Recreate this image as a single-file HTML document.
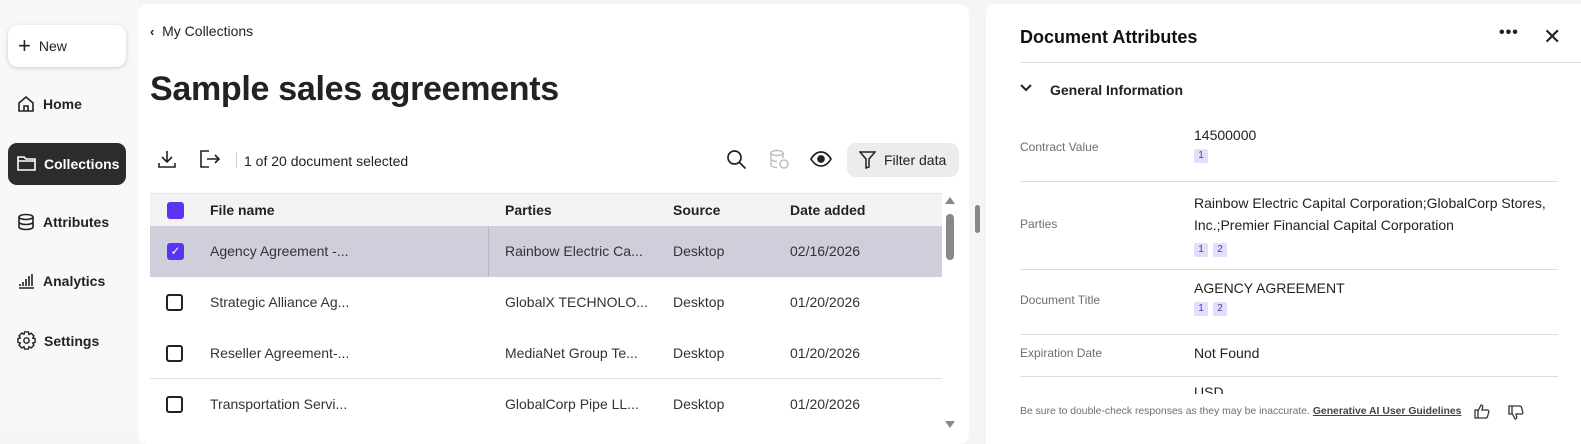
<!DOCTYPE html>
<html><head><meta charset="utf-8"><style>
*{box-sizing:border-box;margin:0;padding:0}
body{width:1581px;height:433px;overflow:hidden;background:#f5f5f5;font-family:"Liberation Sans",sans-serif;color:#222;position:relative}
.a{position:absolute}
.nav{left:17px;font-size:14px;font-weight:bold;color:#222;display:flex;align-items:center;gap:8px}
.cb{position:absolute;left:166px;width:17px;height:17px;border:2px solid #222;border-radius:3px}
.row{position:absolute;left:150px;width:792px;height:51px;font-size:14px;color:#333}
.row span{position:absolute;top:17px}
.lbl{position:absolute;left:1020px;font-size:12px;color:#6e6e6e}
.val{position:absolute;left:1194px;font-size:14px;color:#222}
.tag{display:inline-block;width:14px;height:14px;background:#e3defc;color:#4b3ab0;font-size:10px;text-align:center;line-height:14px;border-radius:2px;margin-right:5px}
.hr{position:absolute;left:1020px;width:538px;height:1px;background:#ddd}
</style></head><body>
<div class="a" style="left:0;top:0;width:138px;height:433px;background:#f8f8f8"></div>
<div class="a" style="left:8px;top:25px;width:118px;height:42px;background:#fff;border-radius:10px;box-shadow:0 1px 4px rgba(0,0,0,.18);font-size:14px;display:flex;align-items:center;padding-left:10px;gap:8px"><span style="font-size:22px;font-weight:300">+</span>New</div>
<div class="a nav" style="top:95px"><svg width="18" height="18" viewBox="0 0 18 18" fill="none" stroke="#222" stroke-width="1.6"><path d="M2 8L9 2l7 6v8H2z M7 16v-5h4v5"/></svg>Home</div>
<div class="a" style="left:8px;top:143px;width:118px;height:42px;background:#2c2c2c;border-radius:9px"></div>
<div class="a nav" style="top:155px;color:#fff"><svg width="19" height="17" viewBox="0 0 19 17" fill="none" stroke="#fff" stroke-width="1.6"><path d="M1 2h6l2 2h9v11H1z M1 6h17"/></svg>Collections</div>
<div class="a nav" style="top:213px"><svg width="18" height="18" viewBox="0 0 18 18" fill="none" stroke="#222" stroke-width="1.6"><ellipse cx="9" cy="4" rx="7" ry="2.5"/><path d="M2 4v10c0 1.4 3 2.5 7 2.5s7-1.1 7-2.5V4M2 9c0 1.4 3 2.5 7 2.5s7-1.1 7-2.5"/></svg>Attributes</div>
<div class="a nav" style="top:272px"><svg width="18" height="18" viewBox="0 0 18 18" stroke="#222" stroke-width="1.6"><path d="M2 16h15M3 14v-2M6 14v-4M9 14V7M12 14V4M15 14V2"/></svg>Analytics</div>
<div class="a nav" style="top:331px"><svg width="19" height="19" viewBox="0 0 20 20" fill="none" stroke="#222" stroke-width="1.5"><path d="M8 1h4l.6 2.6 2.4-1.2 2.8 2.8-1.2 2.4L19 8v4l-2.4.6 1.2 2.4-2.8 2.8-2.4-1.2L12 19H8l-.6-2.4-2.4 1.2-2.8-2.8 1.2-2.4L1 12V8l2.4-.6-1.2-2.4 2.8-2.8 2.4 1.2z"/><circle cx="10" cy="10" r="2.8"/></svg>Settings</div>

<div class="a" style="left:138px;top:4px;width:831px;height:440px;background:#fff;border-radius:10px"></div>
<div class="a" style="left:150px;top:23px;font-size:14px;color:#222"><b style="font-size:13px">‹</b>&nbsp; My Collections</div>
<div class="a" style="left:150px;top:70px;font-size:34px;font-weight:bold;color:#222;letter-spacing:-.3px">Sample sales agreements</div>
<svg class="a" style="left:157px;top:149px" width="20" height="20" viewBox="0 0 20 20" fill="none" stroke="#222" stroke-width="1.6"><path d="M10 2v11M5 8l5 5 5-5M2 14v4h16v-4"/></svg>
<svg class="a" style="left:199px;top:149px" width="22" height="20" viewBox="0 0 22 20" fill="none" stroke="#222" stroke-width="1.6"><path d="M10 2H2v16h8M8 10h12M16 6l4 4-4 4"/></svg>
<div class="a" style="left:236px;top:152px;width:1px;height:16px;background:#ccc"></div>
<div class="a" style="left:244px;top:153px;font-size:14px">1 of 20 document selected</div>
<svg class="a" style="left:726px;top:149px" width="21" height="21" viewBox="0 0 21 21" fill="none" stroke="#222" stroke-width="1.7"><circle cx="8.5" cy="8.5" r="6.5"/><path d="M13.5 13.5l6 6"/></svg>
<svg class="a" style="left:769px;top:149px" width="21" height="21" viewBox="0 0 21 21" fill="none" stroke="#bbb" stroke-width="1.4"><ellipse cx="8" cy="4" rx="6" ry="2.5"/><path d="M2 4v12c0 1.4 3 2.5 6 2.5M14 4v5M2 10c0 1.4 3 2.5 6 2.5"/><circle cx="15" cy="15" r="4"/></svg>
<svg class="a" style="left:810px;top:150px" width="22" height="18" viewBox="0 0 22 18" fill="none" stroke="#222" stroke-width="1.7"><path d="M1 9c3-5 6-7 10-7s7 2 10 7c-3 5-6 7-10 7S4 14 1 9z"/><circle cx="11" cy="9" r="3" fill="#222"/></svg>
<div class="a" style="left:847px;top:143px;width:112px;height:34px;background:#ececec;border-radius:9px;font-size:14px;display:flex;align-items:center;padding-left:12px;gap:8px"><svg width="17" height="18" viewBox="0 0 17 18" fill="none" stroke="#222" stroke-width="1.5"><path d="M1 1h15l-6 7v8l-3 1V8z"/></svg>Filter data</div>

<div class="a" style="left:150px;top:193px;width:792px;height:33px;background:#f3f3f3;border-top:1px solid #e4e4e4"></div>
<div class="a" style="left:167px;top:202px;width:17px;height:17px;background:#5a34f0;border-radius:3px"></div>
<div class="a" style="top:202px;left:210px;font-size:14px;font-weight:bold">File name</div>
<div class="a" style="top:202px;left:505px;font-size:14px;font-weight:bold">Parties</div>
<div class="a" style="top:202px;left:673px;font-size:14px;font-weight:bold">Source</div>
<div class="a" style="top:202px;left:790px;font-size:14px;font-weight:bold">Date added</div>

<div class="row" style="top:226px;background:#cfcfdc"><span style="left:60px">Agency Agreement -...</span><span style="left:355px">Rainbow Electric Ca...</span><span style="left:523px">Desktop</span><span style="left:640px">02/16/2026</span><div class="a" style="left:338px;top:0;width:1px;height:51px;background:#b8b8c8"></div></div>
<div class="a" style="left:167px;top:243px;width:17px;height:17px;background:#5a34f0;border-radius:3px;color:#fff;font-size:12px;text-align:center;line-height:17px">✓</div>
<div class="row" style="top:277px"><span style="left:60px">Strategic Alliance Ag...</span><span style="left:355px">GlobalX TECHNOLO...</span><span style="left:523px">Desktop</span><span style="left:640px">01/20/2026</span></div>
<div class="cb" style="top:294px"></div>
<div class="row" style="top:328px"><span style="left:60px">Reseller Agreement-...</span><span style="left:355px">MediaNet Group Te...</span><span style="left:523px">Desktop</span><span style="left:640px">01/20/2026</span></div>
<div class="cb" style="top:345px"></div>
<div class="a" style="left:150px;top:378px;width:792px;height:1px;background:#e2e2e2"></div>
<div class="row" style="top:379px"><span style="left:60px">Transportation Servi...</span><span style="left:355px">GlobalCorp Pipe LL...</span><span style="left:523px">Desktop</span><span style="left:640px">01/20/2026</span></div>
<div class="cb" style="top:396px"></div>
<div class="a" style="left:945px;top:197px;width:0;height:0;border-left:5px solid transparent;border-right:5px solid transparent;border-bottom:7px solid #888"></div>
<div class="a" style="left:946px;top:214px;width:8px;height:46px;background:#888;border-radius:4px"></div>
<div class="a" style="left:945px;top:421px;width:0;height:0;border-left:5px solid transparent;border-right:5px solid transparent;border-top:7px solid #888"></div>
<div class="a" style="left:975px;top:205px;width:5px;height:28px;background:#888;border-radius:3px"></div>

<div class="a" style="left:986px;top:4px;width:595px;height:440px;background:#fff;border-radius:10px 0 0 0"></div>
<div class="a" style="left:1020px;top:27px;font-size:18px;font-weight:bold;color:#111">Document Attributes</div>
<div class="a" style="left:1499px;top:24px;font-size:16px;font-weight:bold;letter-spacing:1px">•••</div>
<div class="a" style="left:1543px;top:24px;font-size:22px;color:#222">✕</div>
<div class="a" style="left:1020px;top:62px;width:561px;height:1px;background:#ddd"></div>
<svg class="a" style="left:1020px;top:84px" width="12" height="9" viewBox="0 0 12 9" fill="none" stroke="#222" stroke-width="2"><path d="M1 1l5 5 5-5"/></svg>
<div class="a" style="left:1050px;top:82px;font-size:14px;font-weight:bold;color:#222">General Information</div>
<div class="lbl" style="top:140px">Contract Value</div>
<div class="val" style="top:127px">14500000<br><span class="tag" style="margin-top:6px">1</span></div>
<div class="hr" style="top:181px"></div>
<div class="lbl" style="top:217px">Parties</div>
<div class="val" style="top:192px;line-height:22px;width:370px">Rainbow Electric Capital Corporation;GlobalCorp Stores, Inc.;Premier Financial Capital Corporation<br><span class="tag">1</span><span class="tag">2</span></div>
<div class="hr" style="top:269px"></div>
<div class="lbl" style="top:293px">Document Title</div>
<div class="val" style="top:280px">AGENCY AGREEMENT<br><span class="tag" style="margin-top:6px">1</span><span class="tag">2</span></div>
<div class="hr" style="top:334px"></div>
<div class="lbl" style="top:346px">Expiration Date</div>
<div class="val" style="top:345px">Not Found</div>
<div class="hr" style="top:376px"></div>
<div class="a" style="left:1194px;top:386px;width:40px;height:8px;overflow:hidden"><div style="font-size:14px;margin-top:-2px">USD</div></div>
<div class="a" style="left:1020px;top:406px;font-size:10.4px;color:#6e6e6e;white-space:nowrap">Be sure to double-check responses as they may be inaccurate. <u style="color:#444;font-weight:bold">Generative AI User Guidelines</u></div>
<svg class="a" style="left:1474px;top:403px" width="16" height="16" viewBox="0 0 16 16" fill="none" stroke="#333" stroke-width="1.3"><path d="M1 7h3v8H1zM4 8l3-6c1.5 0 2 1 1.6 2.5L8 7h5.5c1 0 1.6 1 1.3 2l-1.3 4.5c-.3.9-.9 1.5-1.8 1.5H4"/></svg>
<svg class="a" style="left:1508px;top:405px" width="16" height="16" viewBox="0 0 16 16" fill="none" stroke="#333" stroke-width="1.3"><path d="M1 1h3v8H1zM4 8l3 6c1.5 0 2-1 1.6-2.5L8 9h5.5c1 0 1.6-1 1.3-2L13.5 2.5C13.2 1.6 12.6 1 11.7 1H4"/></svg>
</body></html>
